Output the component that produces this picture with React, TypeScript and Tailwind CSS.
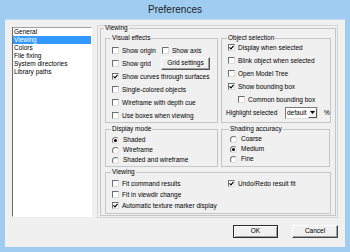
import React from "react";

const Check = ({ on }: { on?: boolean }) => (
  <span className="w-[7px] h-[7px] shrink-0 bg-white border border-t-[#6e6e6e] border-l-[#6e6e6e] border-r-[#dcdcdc] border-b-[#dcdcdc] flex items-center justify-center">
    {on && (
      <svg width="5" height="5" viewBox="0 0 5 5">
        <path d="M0.5 2.3 L2 3.8 L4.6 0.8" stroke="#000" strokeWidth="1.2" fill="none" />
      </svg>
    )}
  </span>
);

const Radio = ({ on }: { on?: boolean }) => (
  <span className="w-[7px] h-[7px] shrink-0 rounded-full bg-white border border-t-[#6e6e6e] border-l-[#6e6e6e] border-r-[#dcdcdc] border-b-[#dcdcdc] flex items-center justify-center">
    {on && <span className="w-[3px] h-[3px] rounded-full bg-black" />}
  </span>
);

const CheckRow = ({ label, on, h = "h-[13px]" }: { label: string; on?: boolean; h?: string }) => (
  <div className={`flex items-center gap-[3px] ${h}`}>
    <Check on={on} />
    <span className="whitespace-nowrap">{label}</span>
  </div>
);

const RadioRow = ({ label, on }: { label: string; on?: boolean }) => (
  <div className="flex items-center gap-[4px] h-[10px]">
    <Radio on={on} />
    <span className="whitespace-nowrap">{label}</span>
  </div>
);

const Legend = ({ children }: { children: React.ReactNode }) => (
  <legend className="leading-[6px] -ml-[1px] px-[1px]">{children}</legend>
);

const pages = ["General", "Viewing", "Colors", "File fixing", "System directories", "Library paths"];

export default function App() {
  return (
    <div className="w-[350px] h-[252px] bg-[#a0ccf2] flex flex-col font-['Liberation_Sans',Arial,sans-serif] text-[6.5px] text-black">
      <div className="h-[19px] shrink-0 flex items-center justify-center text-[10px] text-[#1e1e1e]">Preferences</div>
      <div className="mx-[5px] flex-1 bg-[#f0f0f0] flex flex-col border-t border-[#c4dcf0]">
        <div className="flex items-start pl-[7px] pr-[7px]">
          <div className="mt-[7px] w-[80px] h-[190px] bg-white border border-t-[#a0a0a0] border-l-[#6a6a6a] border-r-white border-b-white">
            {pages.map((p) => (
              <div
                key={p}
                className={`h-[8px] leading-[8px] pl-[1px] ${p === "Viewing" ? "bg-[#3399ff] text-white" : ""}`}
              >
                {p}
              </div>
            ))}
          </div>
          <div className="ml-[5px] mt-[5px] w-[241px] h-[193px] border border-[#d6d6d6] pl-[2px] pr-[3px]">
            <fieldset className="border border-[#c6c6c6] px-[4px] pt-[4px] pb-[1px] -mt-[1px]">
              <Legend>Viewing</Legend>
              <div className="flex gap-[3px]">
                <fieldset className="w-[113px] border border-[#c6c6c6] pl-[6px] pt-[3px]">
                  <Legend>Visual effects</Legend>
                  <div className="flex items-center h-[13px]">
                    <div className="w-[50px] flex items-center gap-[3px]">
                      <Check />
                      <span>Show origin</span>
                    </div>
                    <div className="flex items-center gap-[3px]">
                      <Check />
                      <span>Show axis</span>
                    </div>
                  </div>
                  <div className="flex items-center h-[13px]">
                    <div className="w-[49px] flex items-center gap-[3px]">
                      <Check />
                      <span>Show grid</span>
                    </div>
                    <button className="w-[49px] h-[13px] bg-[#f0f0f0] border border-t-white border-l-white border-r-[#555] border-b-[#555] shadow-[inset_-1px_-1px_0_#a0a0a0] text-[6.5px] leading-none">
                      Grid settings
                    </button>
                  </div>
                  <CheckRow label="Show curves through surfaces" on />
                  <CheckRow label="Single-colored objects" />
                  <CheckRow label="Wireframe with depth cue" />
                  <CheckRow label="Use boxes when viewing" />
                </fieldset>
                <fieldset className="w-[109px] border border-[#c6c6c6] pl-[6px]">
                  <Legend>Object selection</Legend>
                  <CheckRow label="Display when selected" on />
                  <CheckRow label="Blink object when selected" />
                  <CheckRow label="Open Model Tree" />
                  <CheckRow label="Show bounding box" on />
                  <div className="pl-[10px]">
                    <CheckRow label="Common bounding box" />
                  </div>
                  <div className="flex items-center h-[13px] -ml-[2px]">
                    <span className="w-[59px] whitespace-nowrap">Highlight selected</span>
                    <div className="w-[33px] h-[12px] bg-white border border-t-[#7a7a7a] border-l-[#7a7a7a] border-r-[#e0e0e0] border-b-[#e0e0e0] flex items-center">
                      <span className="flex-1 pl-[1px]">default</span>
                      <span className="w-[9px] h-[10px] bg-[#f0f0f0] border border-t-white border-l-white border-r-[#555] border-b-[#555] flex items-center justify-center">
                        <svg width="5" height="3" viewBox="0 0 5 3">
                          <path d="M0 0 H5 L2.5 3 Z" fill="#000" />
                        </svg>
                      </span>
                    </div>
                    <span className="ml-[6px]">%</span>
                  </div>
                </fieldset>
              </div>
              <div className="flex gap-[3px] mt-[3px]">
                <fieldset className="w-[113px] border border-[#c6c6c6] pl-[6px] pt-[3px] pb-[1px]">
                  <Legend>Display mode</Legend>
                  <RadioRow label="Shaded" on />
                  <RadioRow label="Wireframe" />
                  <RadioRow label="Shaded and wireframe" />
                </fieldset>
                <fieldset className="w-[109px] border border-[#c6c6c6] pl-[8px] pt-[2px]">
                  <Legend>Shading accuracy</Legend>
                  <RadioRow label="Coarse" />
                  <RadioRow label="Medium" on />
                  <RadioRow label="Fine" />
                </fieldset>
              </div>
              <fieldset className="mt-[2px] border border-[#c6c6c6] pl-[6px] pt-[3px] pb-[2px]">
                <Legend>Viewing</Legend>
                <div className="grid grid-cols-[116px_1fr]">
                  <CheckRow label="Fit command results" h="h-[11px]" />
                  <CheckRow label="Undo/Redo result fit" on h="h-[11px]" />
                  <CheckRow label="Fit in viewdir change" h="h-[11px]" />
                  <div />
                  <CheckRow label="Automatic texture marker display" on h="h-[11px]" />
                </div>
              </fieldset>
            </fieldset>
          </div>
        </div>
        <div className="flex justify-end gap-[14px] pr-[7px] mt-[7px]">
          <button className="w-[45px] h-[13px] bg-[#f0f0f0] border border-[#2a2a2a] shadow-[inset_1px_1px_0_#fff,inset_-1px_-1px_0_#a0a0a0] text-[6.5px] leading-none">
            OK
          </button>
          <button className="w-[46px] h-[13px] bg-[#f0f0f0] border border-t-white border-l-white border-r-[#444] border-b-[#444] shadow-[inset_-1px_-1px_0_#a0a0a0] text-[6.5px] leading-none">
            Cancel
          </button>
        </div>
      </div>
      <div className="h-[5px] shrink-0" />
    </div>
  );
}
